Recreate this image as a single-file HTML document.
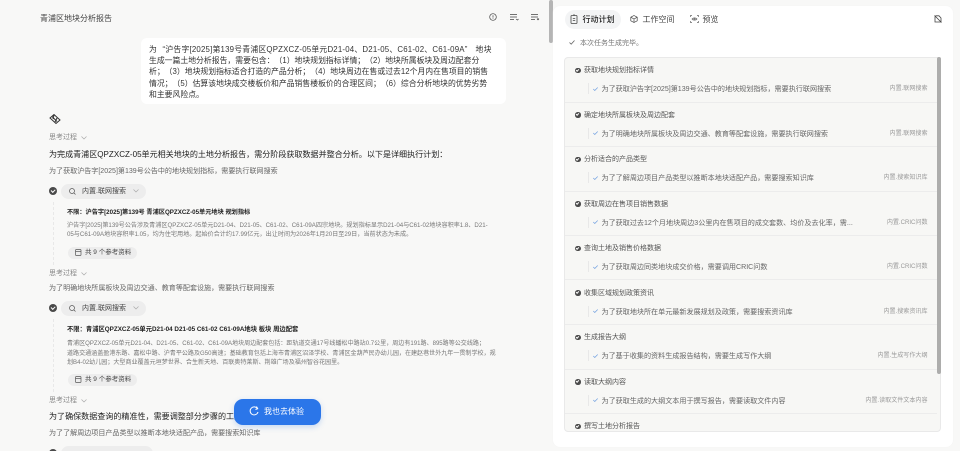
<!DOCTYPE html>
<html lang="zh"><head><meta charset="utf-8"><style>
html,body{margin:0;padding:0;width:960px;height:451px;overflow:hidden;background:#f8f8f7}
body{font-family:"Liberation Sans","Noto Sans CJK SC",sans-serif;color:#333;position:relative;text-spacing-trim:space-all}
#w{position:absolute;left:0;top:0;width:960px;height:451px;filter:blur(.25px)}
.t{position:absolute;white-space:nowrap;line-height:12px;height:12px}
.b{position:absolute}
svg{position:absolute;overflow:visible}
.g{color:#8a8a8a;font-size:7px;margin-top:.3px}
.s{color:#666;font-size:7.05px;margin-top:.7px}
.h{color:#222;font-size:8.05px;margin-top:.5px}
.bd{color:#222;font-size:6.2px;font-weight:bold;margin-top:.6px}
.bd2{font-size:6.3px;margin-top:1.2px}
.c{color:#777;font-size:6.12px}
.c2{font-size:6.05px;margin-top:1px}
.u{color:#333;font-size:7.85px;margin-top:.6px}
.pill{position:absolute;background:#ededed;border-radius:8px}
.dot{position:absolute;border-radius:50%;background:#4a4a4a}
.dot:after{content:"";position:absolute;left:27%;top:26%;width:40%;height:22%;border-left:1px solid #fff;border-bottom:1px solid #fff;transform:rotate(-45deg)}
.ph{color:#555;font-size:7px;margin-top:.9px}
.ps{color:#666;font-size:7.08px;margin-top:.5px}
.pr{color:#999;font-size:6.05px;text-align:right;width:90px;left:837.5px;margin-top:.5px}
.dv{position:absolute;left:565px;width:372px;height:1px;background:#ececec}
.vl{position:absolute;left:587.5px;width:1px;height:11px;background:#e8e8e8}
</style></head><body><div id="w">
<div class="t" style="left:40px;top:12.5px;font-size:8px;color:#444">青浦区地块分析报告</div>
<svg style="left:489px;top:13px" width="8" height="8" viewBox="0 0 8 8" fill="none" stroke="#444" stroke-width=".7"><circle cx="4" cy="4" r="3.3"/><path d="M4 2.2v2.4M4 5.3v.6"/></svg>
<svg style="left:510px;top:14px" width="9" height="8" viewBox="0 0 9 8" fill="none" stroke="#444" stroke-width=".7"><path d="M0 .5h7M0 3h7M0 5.5h4M6 5l1.5 1 1-1"/></svg>
<svg style="left:531px;top:14px" width="9" height="8" viewBox="0 0 9 8" fill="none" stroke="#444" stroke-width=".7"><path d="M0 .5h7M0 3h7M0 5.5h4M6 4.500l2 1.500M8 4.500l-2 1.500"/></svg>
<div class="b" style="left:549px;top:0;width:3.500px;height:43px;background:#b5b5b5;border-radius:2px"></div>

<div class="b" style="left:141px;top:38px;width:365px;height:66px;background:#fff;border-radius:6px"></div>
<div class="t u" style="left:149px;top:43px;letter-spacing:.2px">为<span style="margin-left:5.500px">“</span>沪告字[2025]第139号青浦区QPZXCZ-05单元D21-04、D21-05、C61-02、C61-09A”<span style="margin-left:8px"></span>地块</div>
<div class="t u" style="left:149px;top:54.500px">生成一篇土地分析报告，需要包含：（1）地块规划指标详情；（2）地块所属板块及周边配套分</div>
<div class="t u" style="left:149px;top:65.500px">析；（3）地块规划指标适合打造的产品分析；（4）地块周边在售或过去12个月内在售项目的销售</div>
<div class="t u" style="left:149px;top:77px">情况；（5）估算该地块成交楼板价和产品销售楼板价的合理区间；（6）综合分析地块的优势劣势</div>
<div class="t u" style="left:149px;top:88px">和主要风险点。</div>

<svg style="left:49px;top:113px" width="12" height="12" viewBox="0 0 12 12" fill="none" stroke="#333" stroke-width="1"><path d="M1 5 5 1.500 11 7 7 10.500ZM3 3.500l5 5M5 2l-1 4M8 5 6 9"/></svg>

<div class="t g" style="left:49px;top:131.500px">思考过程</div>
<svg style="left:81px;top:136px" width="6" height="4" fill="none" stroke="#aaa" stroke-width=".7"><path d="M.5.500 3 3l2.500-2.500"/></svg>
<div class="t h" style="left:49px;top:148px">为完成青浦区QPZXCZ-05单元相关地块的土地分析报告，需分阶段获取数据并整合分析。以下是详细执行计划：</div>
<div class="t s" style="left:49px;top:165px">为了获取沪告字[2025]第139号公告中的地块规划指标，需要执行联网搜索</div>

<div class="dot" style="left:49px;top:187px;width:8px;height:8px"></div>
<div class="pill" style="left:61px;top:184px;width:85px;height:14.500px"></div>
<svg style="left:69px;top:188px" width="7" height="7" fill="none" stroke="#555" stroke-width=".7"><circle cx="3" cy="3" r="2.500"/><path d="m5 5 1.500 1.500"/></svg>
<div class="t" style="left:82px;top:185.500px;font-size:7px;color:#444">内置.联网搜索</div>
<svg style="left:133px;top:189px" width="6" height="4" fill="none" stroke="#aaa" stroke-width=".7"><path d="M.5.500 3 3l2.500-2.500"/></svg>
<div class="b" style="left:53px;top:202px;height:63px;border-left:1px dashed #e8e8e8"></div>
<div class="t bd" style="left:67px;top:206px">不限：沪告字[2025]第139号 青浦区QPZXCZ-05单元地块 规划指标</div>
<div class="t c" style="left:67px;top:219.500px">沪告字[2025]第139号公告涉及青浦区QPZXCZ-05单元D21-04、D21-05、C61-02、C61-09A四宗地块。规划指标显示D21-04与C61-02地块容积率1.8、D21-</div>
<div class="t c" style="left:67px;top:229px">05与C61-09A地块容积率1.05，均为住宅用地。起始价合计约17.99亿元，出让时间为2026年1月20日至29日，当前状态为未成。</div>
<div class="pill" style="left:67.500px;top:246.500px;width:69px;height:12px"></div>
<svg style="left:75px;top:249px" width="7" height="7" fill="none" stroke="#555" stroke-width=".7"><rect x=".5" y=".5" width="5.500" height="6" rx=".8"/><path d="M.5 2.500h5.500"/></svg>
<div class="t" style="left:85px;top:247px;font-size:6.500px;color:#444">共 9 个参考资料</div>

<div class="t g" style="left:49px;top:267.500px">思考过程</div>
<svg style="left:81px;top:272px" width="6" height="4" fill="none" stroke="#aaa" stroke-width=".7"><path d="M.5.500 3 3l2.500-2.500"/></svg>
<div class="t s" style="left:49px;top:282.500px">为了明确地块所属板块及周边交通、教育等配套设施，需要执行联网搜索</div>

<div class="dot" style="left:49px;top:304px;width:8px;height:8px"></div>
<div class="pill" style="left:61px;top:301px;width:85px;height:14.500px"></div>
<svg style="left:69px;top:305px" width="7" height="7" fill="none" stroke="#555" stroke-width=".7"><circle cx="3" cy="3" r="2.500"/><path d="m5 5 1.500 1.500"/></svg>
<div class="t" style="left:82px;top:302.500px;font-size:7px;color:#444">内置.联网搜索</div>
<svg style="left:133px;top:306px" width="6" height="4" fill="none" stroke="#aaa" stroke-width=".7"><path d="M.5.500 3 3l2.500-2.500"/></svg>
<div class="b" style="left:53px;top:319px;height:73px;border-left:1px dashed #e8e8e8"></div>
<div class="t bd bd2" style="left:67px;top:323px">不限：青浦区QPZXCZ-05单元D21-04 D21-05 C61-02 C61-09A地块 板块 周边配套</div>
<div class="t c c2" style="left:67px;top:337px">青浦区QPZXCZ-05单元D21-04、D21-05、C61-02、C61-09A地块周边配套包括：距轨道交通17号线蟠松中路站0.7公里，周边有191路、895路等公交线路；</div>
<div class="t c c2" style="left:67px;top:346.500px">道路交通涵盖盈港东路、嘉松中路、沪青平公路及G50高速；基础教育包括上海市青浦区沼泽学校、青浦区金葫芦民办幼儿园，在建赵巷世外九年一贯制学校，规</div>
<div class="t c c2" style="left:67px;top:356px">划B4-02幼儿园；大型商业覆盖元垣梦世界、合生新天地、百联奥特莱斯、荆雄广场及福州智谷花园里。</div>
<div class="pill" style="left:67.500px;top:373.500px;width:69px;height:12px"></div>
<svg style="left:75px;top:376px" width="7" height="7" fill="none" stroke="#555" stroke-width=".7"><rect x=".5" y=".5" width="5.500" height="6" rx=".8"/><path d="M.5 2.500h5.500"/></svg>
<div class="t" style="left:85px;top:374px;font-size:6.500px;color:#444">共 9 个参考资料</div>

<div class="t g" style="left:49px;top:394.500px">思考过程</div>
<svg style="left:81px;top:399px" width="6" height="4" fill="none" stroke="#aaa" stroke-width=".7"><path d="M.5.500 3 3l2.500-2.500"/></svg>
<div class="t h" style="left:49px;top:410px">为了确保数据查询的精准性，需要调整部分步骤的工具选择</div>
<div class="t s" style="left:49px;top:427.500px">为了了解周边项目产品类型以推断本地块适配产品，需要搜索知识库</div>
<div class="dot" style="left:49px;top:449px;width:8px;height:8px"></div>
<div class="pill" style="left:61px;top:446px;width:92px;height:14.500px"></div>

<div class="b" style="left:233.500px;top:398.500px;width:87px;height:26px;background:#2b76e9;border-radius:9px;box-shadow:0 2px 6px rgba(43,118,233,.25)"></div>
<svg style="left:249px;top:406px" width="11" height="11" fill="none" stroke="#fff" stroke-width="1"><path d="M8.500 2.700A4 4 0 1 0 9 6M7.500.500 8.700 2.700 6.500 3.500"/></svg>
<div class="t" style="left:264px;top:406px;font-size:8px;color:#fff">我也去体验</div>

<div class="b" style="left:553px;top:6px;width:400px;height:441px;background:#fff;border-radius:7px;box-shadow:0 0 1px #eee"></div>
<div class="b" style="left:565px;top:10px;width:56px;height:19px;background:#f3f4f5;border-radius:10px"></div>
<svg style="left:570px;top:14px" width="8" height="10" fill="none" stroke="#444" stroke-width=".8"><rect x="1" y="1.500" width="6" height="8" rx=".7"/><path d="M3 1h2M2.800 4.500h2.400M2.800 6.500h2.400"/></svg>
<div class="t" style="left:582.500px;top:14px;font-size:8px;color:#222;font-weight:500">行动计划</div>
<svg style="left:630px;top:15px" width="8" height="8" fill="none" stroke="#444" stroke-width=".7"><path d="M4 .5 7.200 2.200V5.800L4 7.500.8 5.800V2.200ZM.8 2.200 4 4l3.200-1.800M4 4v3.500"/></svg>
<div class="t" style="left:642.500px;top:14px;font-size:8px;color:#444">工作空间</div>
<svg style="left:690px;top:15px" width="9" height="8" fill="none" stroke="#666" stroke-width=".7"><path d="M.5 2V.5H2M7 .5h1.500V2M.5 6v1.500H2M7 7.500h1.500V6M2 4c1-1.500 4-1.500 5 0-1 1.500-4 1.500-5 0Z"/><circle cx="4.500" cy="4" r=".6"/></svg>
<div class="t" style="left:702.500px;top:14px;font-size:8px;color:#444">预览</div>
<svg style="left:934px;top:15px" width="8" height="8" fill="none" stroke="#444" stroke-width=".8"><path d="M1 1.500V7h6V3L5 .800H1.500M.5.500l7 7"/></svg>

<svg style="left:569px;top:40px" width="6" height="5" fill="none" stroke="#666" stroke-width=".8"><path d="M.5 2.500 2.200 4.200 5.500.500"/></svg>
<div class="t" style="left:580px;top:37.500px;font-size:7px;color:#777">本次任务生成完毕。</div>

<div class="b" style="left:564px;top:57px;width:377px;height:375px;background:#f7f7f5;border:.6px solid #e9e9e9;box-sizing:border-box;border-radius:4px"></div>
<div class="b" style="left:937px;top:57px;width:4px;height:317px;background:#adadac;border-radius:2px"></div>

<div class="dv" style="top:101.500px"></div><div class="dv" style="top:146px"></div><div class="dv" style="top:190.500px"></div><div class="dv" style="top:235px"></div><div class="dv" style="top:279px"></div><div class="dv" style="top:324px"></div><div class="dv" style="top:368.500px"></div><div class="dv" style="top:413px"></div>

<div class="dot" style="left:575px;top:67.500px;width:5.500px;height:5.500px"></div>
<div class="t ph" style="left:584px;top:64.500px">获取地块规划指标详情</div>
<div class="vl" style="top:83px"></div>
<svg style="left:593px;top:86.500px" width="5" height="4" fill="none" stroke="#6f9fe0" stroke-width=".7"><path d="M.3 2 1.800 3.500 4.700.500"/></svg>
<div class="t ps" style="left:601.500px;top:82.500px">为了获取沪告字[2025]第139号公告中的地块规划指标，需要执行联网搜索</div>
<div class="t pr" style="top:82.500px">内置.联网搜索</div>

<div class="dot" style="left:575px;top:112px;width:5.500px;height:5.500px"></div>
<div class="t ph" style="left:584px;top:109px">确定地块所属板块及周边配套</div>
<div class="vl" style="top:127.500px"></div>
<svg style="left:593px;top:131px" width="5" height="4" fill="none" stroke="#6f9fe0" stroke-width=".7"><path d="M.3 2 1.800 3.500 4.700.500"/></svg>
<div class="t ps" style="left:601.500px;top:127px">为了明确地块所属板块及周边交通、教育等配套设施，需要执行联网搜索</div>
<div class="t pr" style="top:127px">内置.联网搜索</div>

<div class="dot" style="left:575px;top:156.500px;width:5.500px;height:5.500px"></div>
<div class="t ph" style="left:584px;top:153.500px">分析适合的产品类型</div>
<div class="vl" style="top:172px"></div>
<svg style="left:593px;top:175.500px" width="5" height="4" fill="none" stroke="#6f9fe0" stroke-width=".7"><path d="M.3 2 1.800 3.500 4.700.500"/></svg>
<div class="t ps" style="left:601.500px;top:171.500px">为了了解周边项目产品类型以推断本地块适配产品，需要搜索知识库</div>
<div class="t pr" style="top:171.500px">内置.搜索知识库</div>

<div class="dot" style="left:575px;top:201px;width:5.500px;height:5.500px"></div>
<div class="t ph" style="left:584px;top:198px">获取周边在售项目销售数据</div>
<div class="vl" style="top:216.500px"></div>
<svg style="left:593px;top:220px" width="5" height="4" fill="none" stroke="#6f9fe0" stroke-width=".7"><path d="M.3 2 1.800 3.500 4.700.500"/></svg>
<div class="t ps" style="left:601.500px;top:216px">为了获取过去12个月地块周边3公里内在售项目的成交套数、均价及去化率，需...</div>
<div class="t pr" style="top:216px">内置.CRIC问数</div>

<div class="dot" style="left:575px;top:245.500px;width:5.500px;height:5.500px"></div>
<div class="t ph" style="left:584px;top:242.500px">查询土地及销售价格数据</div>
<div class="vl" style="top:261px"></div>
<svg style="left:593px;top:264.500px" width="5" height="4" fill="none" stroke="#6f9fe0" stroke-width=".7"><path d="M.3 2 1.800 3.500 4.700.500"/></svg>
<div class="t ps" style="left:601.500px;top:260.500px">为了获取周边同类地块成交价格，需要调用CRIC问数</div>
<div class="t pr" style="top:260.500px">内置.CRIC问数</div>

<div class="dot" style="left:575px;top:290px;width:5.500px;height:5.500px"></div>
<div class="t ph" style="left:584px;top:287px">收集区域规划政策资讯</div>
<div class="vl" style="top:305.500px"></div>
<svg style="left:593px;top:309px" width="5" height="4" fill="none" stroke="#6f9fe0" stroke-width=".7"><path d="M.3 2 1.800 3.500 4.700.500"/></svg>
<div class="t ps" style="left:601.500px;top:305px">为了获取地块所在单元最新发展规划及政策，需要搜索资讯库</div>
<div class="t pr" style="top:305px">内置.搜索资讯库</div>

<div class="dot" style="left:575px;top:334.500px;width:5.500px;height:5.500px"></div>
<div class="t ph" style="left:584px;top:331.500px">生成报告大纲</div>
<div class="vl" style="top:350px"></div>
<svg style="left:593px;top:353.500px" width="5" height="4" fill="none" stroke="#6f9fe0" stroke-width=".7"><path d="M.3 2 1.800 3.500 4.700.500"/></svg>
<div class="t ps" style="left:601.500px;top:349.500px">为了基于收集的资料生成报告结构，需要生成写作大纲</div>
<div class="t pr" style="top:349.500px">内置.生成写作大纲</div>

<div class="dot" style="left:575px;top:379px;width:5.500px;height:5.500px"></div>
<div class="t ph" style="left:584px;top:376px">读取大纲内容</div>
<div class="vl" style="top:394.500px"></div>
<svg style="left:593px;top:398px" width="5" height="4" fill="none" stroke="#6f9fe0" stroke-width=".7"><path d="M.3 2 1.800 3.500 4.700.500"/></svg>
<div class="t ps" style="left:601.500px;top:394px">为了获取生成的大纲文本用于撰写报告，需要读取文件内容</div>
<div class="t pr" style="top:394px">内置.读取文件文本内容</div>

<div class="dot" style="left:575px;top:423.500px;width:5.500px;height:5.500px"></div>
<div class="t ph" style="left:584px;top:420.500px">撰写土地分析报告</div>
</div></body></html>
